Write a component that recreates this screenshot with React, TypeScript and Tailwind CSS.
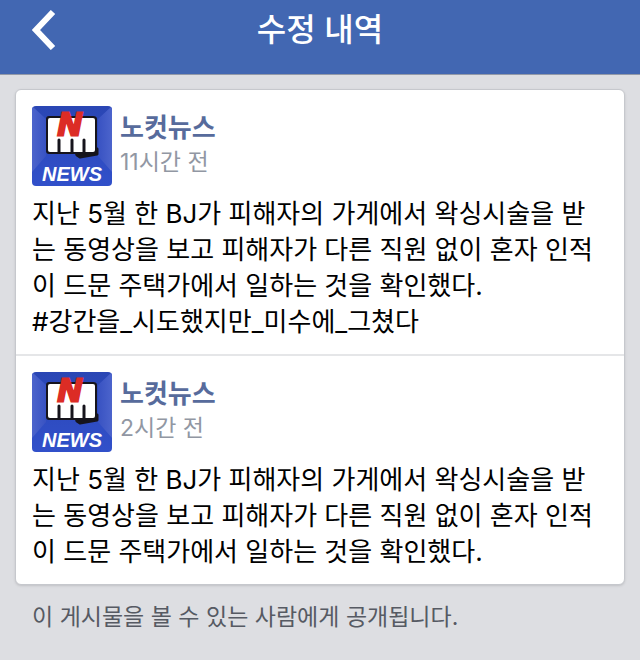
import { useState } from "react"

interface Revision {
  id: number
  author: string
  time: string
  text: string
}

const revisions: Revision[] = [
  {
    id: 1,
    author: "노컷뉴스",
    time: "11시간 전",
    text: "지난 5월 한 BJ가 피해자의 가게에서 왁싱시술을 받는 동영상을 보고 피해자가 다른 직원 없이 혼자 인적이 드문 주택가에서 일하는 것을 확인했다.\n#강간을_시도했지만_미수에_그쳤다",
  },
  {
    id: 2,
    author: "노컷뉴스",
    time: "2시간 전",
    text: "지난 5월 한 BJ가 피해자의 가게에서 왁싱시술을 받는 동영상을 보고 피해자가 다른 직원 없이 혼자 인적이 드문 주택가에서 일하는 것을 확인했다.",
  },
]

function NewsLogo() {
  return (
    <svg viewBox="0 0 80 80" className="size-20 shrink-0 rounded" role="img" aria-label="노컷뉴스">
      <defs>
        <linearGradient id="logo-bg" x1="0" y1="0" x2="0" y2="1">
          <stop offset="0" stopColor="#2a46b4" />
          <stop offset="1" stopColor="#3150ca" />
        </linearGradient>
        <linearGradient id="logo-left" x1="0" y1="0" x2="1" y2="0">
          <stop offset="0" stopColor="#4c64cc" />
          <stop offset="1" stopColor="#3852c2" />
        </linearGradient>
        <linearGradient id="logo-right" x1="1" y1="0" x2="0" y2="0">
          <stop offset="0" stopColor="#4c64cc" />
          <stop offset="1" stopColor="#3852c2" />
        </linearGradient>
      </defs>
      <rect width="80" height="80" fill="url(#logo-bg)" />
      <path d="M0 0L14 13V50L0 66Z" fill="url(#logo-left)" />
      <path d="M80 0L66 13V50L80 66Z" fill="url(#logo-right)" />
      {/* puño con los dedos */}
      <path d="M44 46L65 43V48L48 51L45 49Z" fill="#16141c" stroke="#16141c" strokeWidth="3" strokeLinejoin="round" />
      <path d="M17 10H61Q65 10 65 13V45Q65 48 62 48H17Q14 48 14 45V13Q14 10 17 10Z" fill="#16141c" />
      <path d="M18 12H61Q63 12 63 14V44Q63 46 61 46H18Q16 46 16 44V14Q16 12 18 12Z" fill="#fff" />
      <path d="M27 34V46M40 34V46M52 34V46" stroke="#16141c" strokeWidth="3" strokeLinecap="round" />
      <text x="26" y="29" fontSize="32" fontWeight="700" fontStyle="italic" fill="#dc2c25" stroke="#dc2c25" strokeWidth="3" fontFamily="Liberation Sans, sans-serif">
        N
      </text>
      <text x="10" y="75" fontSize="20" fontWeight="700" fontStyle="italic" fill="#fff" fontFamily="Liberation Sans, sans-serif">
        NEWS
      </text>
    </svg>
  )
}

export default function App() {
  const [items] = useState<Revision[]>(revisions)

  return (
    <div className="min-h-screen bg-[#dddee2] font-['Inter','Noto_Sans_CJK_KR',sans-serif]" lang="ko">
      {/* HEADER */}
      <header className="grid h-[75px] grid-cols-[80px_1fr_80px] border-b border-[#9299a8] bg-[#4267b2] pb-[14px] text-white">
        <button type="button" aria-label="뒤로" className="flex items-center pl-8">
          <svg viewBox="0 0 24 40" className="h-10 w-6" fill="none" stroke="currentColor" strokeWidth="6">
            <path d="M21 2L4 20L21 38" />
          </svg>
        </button>
        <h1 className="self-center text-center text-[32px] leading-10 font-medium">수정 내역</h1>
      </header>

      <main className="px-[15px] pt-[14px]">
        {/* REVISIONES */}
        <div className="rounded-md border border-[#c6c8cd] bg-white shadow-sm">
          {items.map(item => (
            <article key={item.id} className="border-b-2 border-[#e5e6e8] px-4 pt-4 pb-[14px] last:border-b-0">
              <div className="flex gap-2">
                <NewsLogo />
                <div className="pt-1">
                  <h2 className="text-[26px] leading-9 font-bold text-[#576b9c]">
                    <a href="#">{item.author}</a>
                  </h2>
                  <p className="text-[23px] leading-8 text-[#9197a3]">{item.time}</p>
                </div>
              </div>
              <p className="mt-[10px] text-[26px] leading-9 break-all whitespace-pre-line text-black">{item.text}</p>
            </article>
          ))}
        </div>

        <p className="px-[17px] pt-3 text-[23px] leading-10 text-[#565a63]">이 게시물을 볼 수 있는 사람에게 공개됩니다.</p>
      </main>
    </div>
  )
}
